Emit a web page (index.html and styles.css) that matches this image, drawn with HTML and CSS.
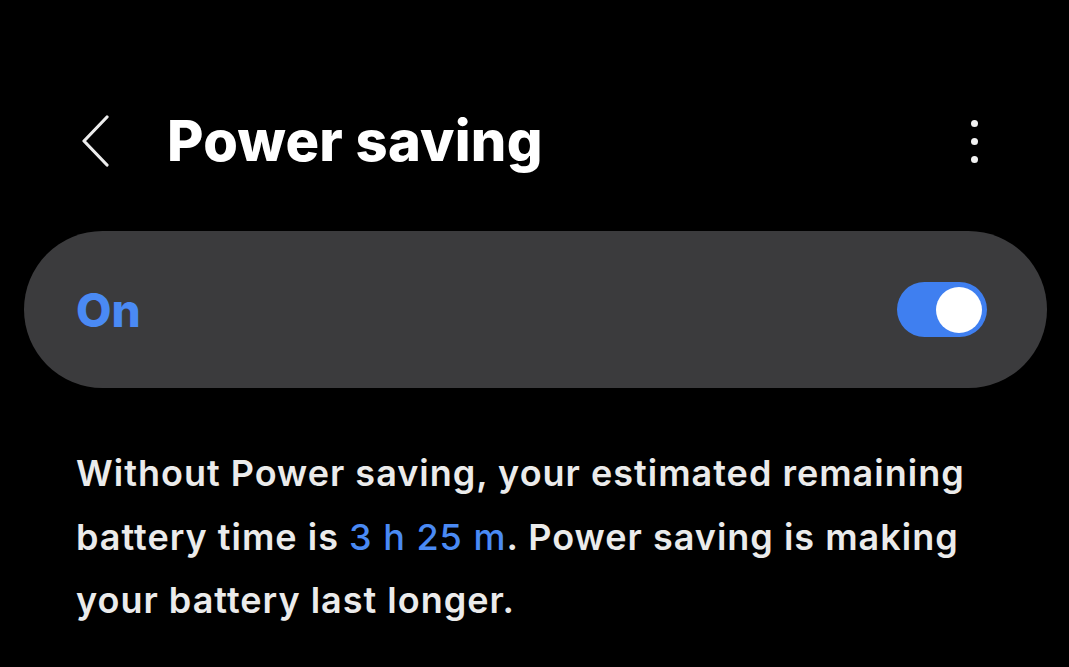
FILE: index.html
```html
<!DOCTYPE html>
<html>
<head>
<meta charset="utf-8">
<link rel="stylesheet" href="styles.css">
</head>
<body>
<div class="screen">
  <header class="appbar">
    <div class="back">
      <svg width="30" height="52" viewBox="0 0 30 52"><path d="M27 2 L4 26 L27 50" fill="none" stroke="#ececec" stroke-width="3.2" stroke-linecap="round" stroke-linejoin="round"/></svg>
    </div>
    <h1 class="title">Power saving</h1>
    <div class="more">
      <span class="dot"></span><span class="dot"></span><span class="dot"></span>
    </div>
  </header>
  <section class="card">
    <span class="on">On</span>
    <span class="switch"><span class="thumb"></span></span>
  </section>
  <p class="desc">Without Power saving, your estimated remaining battery time is <span class="hl">3 h 25 m</span>. Power saving is making your battery last longer.</p>
</div>
</body>
</html>
```

FILE: styles.css
```css
* { box-sizing: border-box; }
html, body { margin: 0; padding: 0; background: #000; }
body { font-family: Inter, "Noto Sans", sans-serif; color: #ededed; }
.screen { width: 1069px; height: 667px; overflow: hidden; background: #000; }
.appbar { display: flex; align-items: center; height: 100px; margin-top: 91px; padding-left: 80px; padding-right: 91px; }
.back { width: 30px; height: 52px; display: flex; }
.title { margin: 0 0 0 57px; font-size: 56px; font-weight: 800; color: #fff; letter-spacing: 0.25px; flex: 1; line-height: 1; }
.more { display: flex; flex-direction: column; gap: 11px; }
.dot { width: 7px; height: 7px; border-radius: 50%; background: #f2f2f2; }
.card { margin: 40px 22px 0 24px; height: 157px; border-radius: 79px; background: #3b3b3d; display: flex; align-items: center; justify-content: space-between; padding: 0 60px 0 52px; }
.on { font-size: 46px; font-weight: 800; color: #4a8af4; }
.switch { width: 90px; height: 55px; border-radius: 28px; background: #3f7ff0; display: flex; align-items: center; justify-content: flex-end; padding-right: 5px; }
.thumb { width: 46px; height: 46px; border-radius: 50%; background: #fff; }
.desc { margin: 54px 60px 0 76px; font-size: 36px; font-weight: 600; line-height: 63.5px; letter-spacing: 1px; color: #ebebeb; }
.hl { color: #4a8af4; font-weight: 500; }
```
